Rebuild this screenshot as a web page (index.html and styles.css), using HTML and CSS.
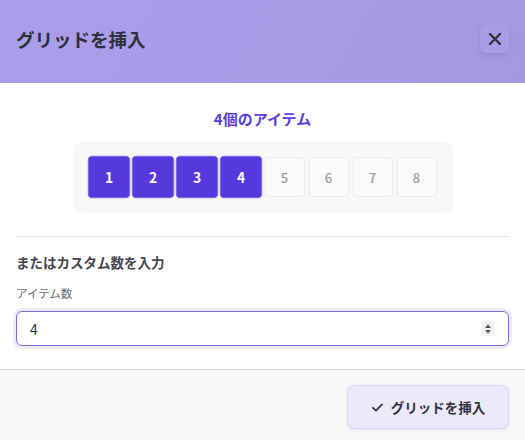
FILE: index.html
```html
<!DOCTYPE html>
<html lang="ja">
<head>
<meta charset="utf-8">
<link rel="stylesheet" href="styles.css">
</head>
<body>
<div class="dialog">
  <header class="header">
    <h1 class="title">グリッドを挿入</h1>
    <button class="close" aria-label="閉じる">
      <svg width="14" height="14" viewBox="0 0 14 14"><path d="M2 2L12 12M12 2L2 12" stroke="#33333d" stroke-width="2.4" stroke-linecap="round"/></svg>
    </button>
  </header>
  <main class="body">
    <div class="count">4個のアイテム</div>
    <div class="grid-wrap">
      <div class="grid">
        <div class="cell on">1</div>
        <div class="cell on">2</div>
        <div class="cell on">3</div>
        <div class="cell on">4</div>
        <div class="cell">5</div>
        <div class="cell">6</div>
        <div class="cell">7</div>
        <div class="cell">8</div>
      </div>
    </div>
    <hr class="divider">
    <div class="subhead">またはカスタム数を入力</div>
    <div class="label">アイテム数</div>
    <div class="input">
      <span class="value">4</span>
      <span class="spin">
        <svg width="8" height="12" viewBox="0 0 8 12"><path d="M4 1.5L7 5H1Z M4 10.5L7 7H1Z" fill="#555"/></svg>
      </span>
    </div>
  </main>
  <footer class="footer">
    <button class="insert">
      <svg width="13" height="13" viewBox="0 0 13 13"><path d="M2 6.8L5 9.6L11 3.4" fill="none" stroke="#33333d" stroke-width="1.8" stroke-linecap="round" stroke-linejoin="round"/></svg>
      <span>グリッドを挿入</span>
    </button>
  </footer>
</div>
</body>
</html>
```
FILE: styles.css
```css
* { box-sizing: border-box; }
html, body { margin: 0; padding: 0; }
body {
  font-family: "Noto Sans CJK JP", "Noto Sans", sans-serif;
  background: #fff;
  color: #33333d;
  width: 525px;
  height: 440px;
  overflow: hidden;
}
.dialog { display: flex; flex-direction: column; height: 440px; }
.header {
  height: 83px;
  background: linear-gradient(120deg, #ab9fec 0%, #a79be6 60%, #a499e0 100%);
  display: flex;
  align-items: center;
  justify-content: space-between;
  padding: 0 16px 6px 16px;
}
.title {
  margin: 0;
  font-size: 18.5px;
  font-weight: 700;
  color: #2f2f3a;
}
.close {
  width: 29px;
  height: 29px;
  border: none;
  border-radius: 6px;
  background: #a99de8;
  box-shadow: 0 2px 5px rgba(70, 50, 160, 0.16);
  display: flex;
  align-items: center;
  justify-content: center;
  padding: 0;
}
.body { padding: 0 16px; flex: 1; }
.count {
  margin-top: 24px;
  text-align: center;
  font-size: 15px;
  line-height: 24px;
  font-weight: 700;
  color: #5a3edc;
}
.grid-wrap { display: flex; justify-content: center; margin-top: 10px; }
.grid {
  background: #f7f8fa;
  border-radius: 9px;
  padding: 16px;
  display: flex;
  gap: 4px;
}
.cell {
  width: 40px;
  height: 40px;
  border-radius: 4px;
  background: #fafafb;
  border: 1px solid #ebebef;
  display: flex;
  align-items: center;
  justify-content: center;
  font-size: 13px;
  font-weight: 500;
  color: #9a9aa2;
}
.cell.on {
  background: #5639dc;
  border-color: #7f6be6;
  color: #fff;
  font-weight: 700;
  transform: scale(1.06);
}
.divider {
  border: none;
  border-top: 1px solid #e5e5ea;
  margin: 23px 0 0 0;
}
.subhead {
  margin-top: 14px;
  font-size: 13.5px;
  line-height: 22px;
  font-weight: 700;
  color: #45454d;
}
.label {
  margin-top: 11px;
  font-size: 11.5px;
  line-height: 18px;
  color: #6a6a72;
}
.input {
  margin-top: 9px;
  height: 35px;
  border: 1.5px solid #7b6be6;
  border-radius: 6px;
  box-shadow: 0 0 0 3px #eeebfc;
  display: flex;
  align-items: center;
  justify-content: space-between;
  padding: 0 14px 0 13px;
}
.value { font-size: 14px; color: #33333d; }
.spin {
  width: 12px;
  height: 15px;
  background: #f0f0f2;
  display: flex;
  align-items: center;
  justify-content: center;
}
.footer {
  height: 71px;
  border-top: 1px solid #d8d8dc;
  background: #f8f8fa;
  display: flex;
  align-items: flex-start;
  justify-content: flex-end;
  padding: 15px 16px 0 16px;
}
.insert {
  width: 162px;
  height: 44px;
  border: 1.5px solid #dcd6f6;
  border-radius: 7px;
  background: #ece9fa;
  box-shadow: 0 1px 3px rgba(80, 60, 180, 0.12);
  display: flex;
  align-items: center;
  justify-content: center;
  gap: 7px;
  font-family: inherit;
  font-size: 13.5px;
  font-weight: 700;
  color: #33333d;
  padding: 0;
}
```
